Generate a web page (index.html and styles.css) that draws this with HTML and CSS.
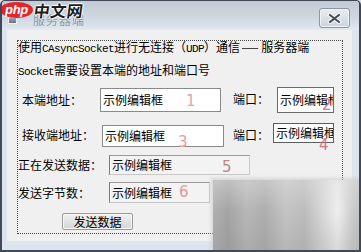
FILE: index.html
```html
<!DOCTYPE html>
<html lang="zh-CN">
<head>
<meta charset="utf-8">
<title>服务器端</title>
<link rel="stylesheet" href="styles.css">
</head>
<body>
<div class="window">
  <div class="titlebar">
    <span class="app-icon"></span>
    <span class="title">服务器端</span>
    <span class="close">
      <svg width="15" height="11" viewBox="0 0 15 11">
        <path d="M3 2 L12 9 M12 2 L3 9" stroke="#fff" stroke-width="4" stroke-linecap="square"/>
        <path d="M3 2 L12 9 M12 2 L3 9" stroke="#4a4f57" stroke-width="2" stroke-linecap="square"/>
      </svg>
    </span>
    <div class="logo"><span class="logo-php">php</span><span class="logo-cn">中文网</span></div>
  </div>
  <div class="client">
    <div class="group">
      <div class="intro">使用<span class="asc">CAsyncSocket</span>进行无连接（<span class="asc">UDP</span>）通信<span class="dash">——</span>服务器端</div>
      <div class="intro intro-2"><span class="asc">Socket</span>需要设置本端的地址和端口号</div>

      <div class="row row-1">
        <span class="label">本端地址：</span>
        <span class="edit edit-1"><span class="val">示例编辑框</span><span class="tag tag-1">1</span></span>
        <span class="label port-1">端口：</span>
        <span class="edit edit-2"><span class="val">示例编辑框</span><span class="tag tag-2">2</span></span>
      </div>

      <div class="row row-2">
        <span class="label">接收端地址：</span>
        <span class="edit edit-3"><span class="val">示例编辑框</span><span class="tag tag-3">3</span></span>
        <span class="label port-2">端口：</span>
        <span class="edit edit-4"><span class="val">示例编辑框</span><span class="tag tag-4">4</span></span>
      </div>

      <div class="row row-3">
        <span class="label">正在发送数据：</span>
        <span class="edit readonly edit-5"><span class="val">示例编辑框</span><span class="tag tag-5">5</span></span>
      </div>

      <div class="row row-4">
        <span class="label">发送字节数：</span>
        <span class="edit readonly edit-6"><span class="val">示例编辑框</span><span class="tag tag-6">6</span></span>
      </div>

      <div class="row row-5">
        <button class="btn">发送数据</button>
      </div>
    </div>
  </div>
  <div class="watermark"></div>
</div>
</body>
</html>
```
FILE: styles.css
```css
html, body {
  margin: 0;
  padding: 0;
}
body {
  width: 361px;
  height: 252px;
  overflow: hidden;
  font-family: "Noto Sans CJK SC", sans-serif;
  font-size: 12px;
  color: #000;
  background: #dae3ed;
}

.window {
  position: relative;
  box-sizing: border-box;
  width: 361px;
  height: 252px;
  border: 2px solid #3f4a56;
  border-top-width: 1px;
  border-radius: 5px 5px 0 0;
  background: #dce5ee;
  display: flex;
  flex-direction: column;
  overflow: hidden;
}

/* ---------- title bar ---------- */
.titlebar {
  position: relative;
  height: 29px;
  flex: none;
  display: flex;
  align-items: flex-start;
  padding: 0 9px 0 6px;
  background: linear-gradient(#c2cbd5, #cfd7e0 55%, #d9e1ea 85%, #e3eaf2);
}
.app-icon {
  width: 9px;
  height: 7px;
  margin-top: 16px;
  background: linear-gradient(#9aa3ad, #6d7680);
  border: 1px solid #eef2f6;
  box-sizing: border-box;
}
.title {
  margin: 13px 0 0 16px;
  line-height: 12px;
  font-size: 12px;
  color: #8e98a3;
  letter-spacing: 1px;
  filter: blur(0.6px);
}
.close {
  margin: 7px 0 0 auto;
  width: 31px;
  height: 20px;
  box-sizing: border-box;
  border: 1px solid #8996a5;
  border-radius: 3px;
  box-shadow: inset 0 0 0 1px #eef3f8;
  background: linear-gradient(#e8edf2, #cbd3dc);
  display: flex;
  align-items: center;
  justify-content: center;
}
.logo {
  position: absolute;
  left: -2px;
  top: 1px;
  display: flex;
  align-items: center;
}
.logo-php {
  width: 33px;
  height: 16px;
  border-radius: 50%;
  background: #e4262c;
  color: #fff;
  font: italic bold 13px/15px "Liberation Sans", sans-serif;
  text-align: center;
  letter-spacing: -0.3px;
}
.logo-cn {
  margin-left: 1px;
  font: bold 16px/16px "Noto Sans CJK SC", sans-serif;
  color: #1d1d1d;
  letter-spacing: 0.5px;
  transform: skewX(-8deg);
  text-shadow: 1px 0 0 #fff, -1px 0 0 #fff, 0 1px 0 #fff, 0 -1px 0 #fff;
}

/* ---------- client area ---------- */
.client {
  flex: none;
  width: 345px;
  height: 211px;
  margin-left: 5px;
  background: #f0f0f0;
  box-sizing: border-box;
  padding: 10px 9px 7px 10px;
}
.group {
  box-sizing: border-box;
  height: 194px;
  border: 1px dotted #4a4a4a;
  display: flex;
  flex-direction: column;
}
.intro {
  height: 12px;
  line-height: 12px;
  white-space: nowrap;
}
.intro-2 {
  margin-top: 11px;
}
.asc {
  font-family: "Liberation Mono", monospace;
  font-size: 11px;
  letter-spacing: -0.6px;
}
.dash {
  display: inline-block;
  transform: scaleX(0.85);
  letter-spacing: 1px;
}

.row {
  display: flex;
  align-items: center;
  white-space: nowrap;
}
.label {
  line-height: 12px;
}
.row-1 { margin-top: 11px; height: 26px; padding-left: 4px; }
.row-2 { margin-top: 10px; height: 24px; padding-left: 4px; }
.row-3 { margin-top: 8px;  height: 20px; }
.row-4 { margin-top: 7px;  height: 21px; }
.row-5 { margin-top: 10px; height: 17px; padding-left: 44px; }

.edit {
  position: relative;
  box-sizing: border-box;
  display: flex;
  align-items: center;
  border: 1px solid #8a8a8a;
  background: #fff;
  padding-left: 2px;
}
.val {
  display: block;
  overflow: hidden;
  white-space: nowrap;
  line-height: 14px;
  flex: 1;
}
.readonly {
  background: #f3f3f3;
  border-color: #9a9a9a #c8c8c8 #c8c8c8 #7e7e7e;
}

.edit-1 { margin-left: 18px; width: 121px; height: 24px; }
.port-1 { margin-left: 12px; margin-top: -2px; }
.edit-2 { margin-left: 8px;  width: 57px;  height: 26px; border-color: #6a6a6a; }

.edit-3 { margin-left: 8px; width: 122px; height: 22px; margin-top: 1px; }
.port-2 { margin-left: 9px; }
.edit-4 { margin-left: 4px; width: 61px; height: 20px; align-self: flex-start; border-color: #5c5c5c; }

.edit-5 { margin-left: 7px;  width: 141px; height: 20px; }
.edit-6 { margin-left: 19px; width: 101px; height: 21px; }

.tag {
  position: absolute;
  font: 15px/15px "DejaVu Sans", sans-serif;
  color: #d98c94;
}
.tag-1 { left: 85px; top: 5px; color: #e3a6ad; }
.tag-2 { left: 44px; top: 10px; color: #d27784; }
.tag-3 { left: 75px; top: 9px; color: #e79aa0; }
.tag-4 { left: 45px; top: 14px; color: #d27784; }
.tag-5 { left: 112px; top: 4px; color: #bf8585; }
.tag-6 { left: 69px; top: 2px; color: #dd9aa0; }

.btn {
  box-sizing: border-box;
  width: 71px;
  height: 17px;
  padding: 0;
  border: 1px solid #9b9b9b;
  border-radius: 2px;
  box-shadow: inset 0 0 0 1px #f7f7f7;
  background: linear-gradient(#f1f1f1, #e2e2e2 50%, #d6d6d6);
  font: 12px/14px "Noto Sans CJK SC", sans-serif;
  color: #000;
}

/* ---------- blurred watermark overlay ---------- */
.watermark {
  position: absolute;
  z-index: 5;
  left: 211px;
  top: 179px;
  width: 152px;
  height: 76px;
  background-color: #c4c4c4;
  background-image:
    linear-gradient(rgba(225,225,225,0.45), rgba(225,225,225,0) 40%, rgba(110,110,110,0.18)),
    linear-gradient(90deg, #b0b0b0 0%, #a4a4a4 10%, #b8b8b8 22%, #aeaeae 34%, #c4c4c4 48%, #bcbcbc 60%, #dcdcdc 74%, #eeeeee 82%, #cccccc 92%, #bebebe 100%);
  box-shadow: 0 0 3px 2px rgba(200,200,200,0.6);
}
```
